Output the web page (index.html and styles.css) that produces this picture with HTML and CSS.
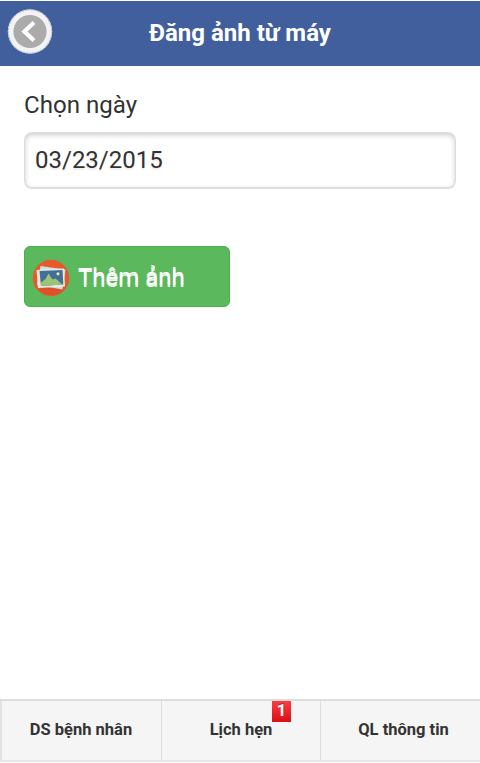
FILE: index.html
```html
<!DOCTYPE html>
<html lang="vi">
<head>
<meta charset="utf-8">
<title>Đăng ảnh từ máy</title>
<link rel="stylesheet" href="styles.css">
</head>
<body>
<header class="header">
  <a class="back" href="#" aria-label="Quay lại">
    <svg width="46" height="46" viewBox="0 0 46 46">
      <circle cx="23" cy="22.5" r="22.2" fill="#f3f3f5"/>
      <circle cx="23" cy="22.5" r="21.6" fill="none" stroke="#a4adbf" stroke-width=".9" stroke-dasharray="2 1"/>
      <circle cx="23" cy="22.5" r="16.6" fill="#ababab"/>
      <path d="M27 13.4 17.4 22.5l9.6 9.1" fill="none" stroke="#fff" stroke-width="4.2"/>
    </svg>
  </a>
  <h1 class="title">Đăng ảnh từ máy</h1>
</header>
<main class="content">
  <label class="label" for="date">Chọn ngày</label>
  <input class="date" id="date" type="text" value="03/23/2015">
  <button class="add" type="button">
    <svg width="38" height="38" viewBox="0 0 38 38">
      <circle cx="19" cy="19" r="18.2" fill="#e9572b"/>
      <path d="M7 30 32 26l2 2c-4 6-9 8-15 8-5 0-9-2-12-6z" fill="#dc5129"/>
      <path d="M8.5 7 33.5 10.5l-3 20L5 26z" fill="#cfdedf"/>
      <path d="M4.5 11 32 9.5l1 18-27 1.5z" fill="#e9ebe3"/>
      <path d="M7.5 12 30.5 11l.8 14.5L9 27z" fill="#416f98"/>
      <path d="m8.5 24 5-4 3-5.5 4 6 3-1 7 6L9 27z" fill="#9bc576"/>
      <circle cx="26" cy="14.8" r="1.6" fill="#eee69b"/>
    </svg>
    <span class="add-text">Thêm ảnh</span>
  </button>
</main>
<nav class="tabs">
  <a class="tab" href="#">DS bệnh nhân</a>
  <a class="tab" href="#">Lịch hẹn<span class="badge">1</span></a>
  <a class="tab" href="#">QL thông tin</a>
</nav>
</body>
</html>
```
FILE: styles.css
```css
* { box-sizing: border-box; }
body {
  margin: 0;
  height: 763px;
  display: flex;
  flex-direction: column;
  overflow: hidden;
  background: #fff;
  color: #333;
  font-family: Roboto, sans-serif;
}
.header {
  display: grid;
  grid-template-columns: 60px 1fr 60px;
  align-items: center;
  height: 66px;
  border-top: 1px solid #fff;
  background: #415f9c;
}
.back {
  display: block;
  height: 46px;
  margin: 0 0 3px 7px;
}
.back svg, .add svg { display: block; }
.title {
  margin: 0;
  padding-bottom: 2px;
  color: #fff;
  font-size: 24px;
  line-height: 30px;
  font-weight: 700;
  text-align: center;
}
.content {
  flex: 1;
  padding: 24px;
}
.label {
  display: block;
  height: 42px;
  font-size: 24.1px;
  line-height: 30px;
}
.date {
  display: block;
  width: 432px;
  height: 57px;
  padding: 0 10px;
  border: 1px solid #ddd;
  border-bottom-width: 2px;
  border-radius: 8px;
  background: #fff;
  box-shadow: inset 0 2px 5px rgba(0, 0, 0, .2);
  color: #333;
  font: 24px/32px Roboto, sans-serif;
  text-shadow: 0 2px 1px #eee;
  outline: 0;
}
.add {
  display: flex;
  align-items: center;
  gap: 8px;
  width: 205.5px;
  height: 61px;
  margin: 57px 0 0;
  padding: 3px 7px 0;
  border: 1.5px solid #4cae4c;
  border-radius: 6px;
  background: #5cb85c;
  color: #fff;
  font: 24px/30px Roboto, sans-serif;
  text-shadow: 0 1.5px 0 #f3f3f3;
}
.add-text { padding-bottom: 2px; }
.tabs {
  display: grid;
  grid-template-columns: 161px 159px 160px;
  height: 64px;
  padding-bottom: 1px;
  border-top: 2px solid #ddd;
}
.tab {
  position: relative;
  display: flex;
  align-items: center;
  justify-content: center;
  padding: 0 0 2px;
  border-left: 1px solid #ddd;
  border-bottom: 2px solid #e6e6e6;
  background: #f5f5f5;
  color: #333;
  font-size: 16.5px;
  font-weight: 700;
  text-decoration: none;
}
.tab:first-child {
  padding-right: 1px;
  border-left: 2px solid #e2e2e2;
}
.tab:last-child { padding-left: 6px; }
.badge {
  position: absolute;
  top: 0;
  left: 110px;
  width: 19px;
  height: 21px;
  background: linear-gradient(#fa3c45, #dc0d17);
  color: #fff;
  font-size: 16.5px;
  line-height: 19px;
  text-align: center;
  text-shadow: 0 -1px 0 rgba(0, 0, 0, .4);
}
```
